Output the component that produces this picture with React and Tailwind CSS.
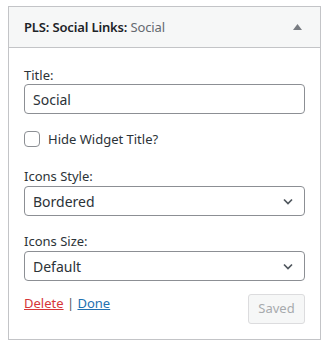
export default function App() {
  const font = { fontFamily: '"Noto Sans", "Open Sans", sans-serif' };
  return (
    <div className="w-[329px] h-[345px] bg-white pt-[6px] pl-[8px]" style={font}>
      <div className="w-[313px] h-[334px] border border-[#c3c4c7] bg-white flex flex-col">
        <div className="h-[44px] bg-[#f6f7f7] border-b border-[#c3c4c7] flex items-center justify-between pl-[15px] pr-[18px]">
          <div className="text-[13px] leading-[18px] text-[#1d2327] font-semibold tracking-[-0.15px]">
            PLS: Social Links: <span className="font-normal text-[#646970]">Social</span>
          </div>
          <svg width="9" height="6" viewBox="0 0 9 6"><polygon points="4.5,0 9,6 0,6" fill="#787c82" /></svg>
        </div>
        <div className="flex flex-col px-[15px] pt-[18px] pb-[15px] text-[#2c3338]">
          <label className="text-[13px] leading-[18px]">Title:</label>
          <div className="h-[30px] border border-[#8c8f94] rounded-[4px] flex items-center px-[8px] text-[14px] text-[#2c3338]">Social</div>
          <div className="mt-[16px] flex items-center gap-[8px]">
            <div className="w-[16px] h-[16px] border border-[#8c8f94] rounded-[4px]"></div>
            <span className="text-[13px] leading-[18px]">Hide Widget Title?</span>
          </div>
          <label className="mt-[19px] text-[13px] leading-[18px]">Icons Style:</label>
          <div className="mt-px h-[30px] border border-[#8c8f94] rounded-[4px] flex items-center justify-between pl-[8px] pr-[8px] text-[14px]">
            <span>Bordered</span>
            <svg width="16" height="16" viewBox="0 0 16 16"><path d="M4 6.5 L8 10.5 L12 6.5" stroke="#50575e" strokeWidth="1.7" fill="none" /></svg>
          </div>
          <label className="mt-[16px] text-[13px] leading-[18px]">Icons Size:</label>
          <div className="mt-px h-[30px] border border-[#8c8f94] rounded-[4px] flex items-center justify-between pl-[8px] pr-[8px] text-[14px]">
            <span>Default</span>
            <svg width="16" height="16" viewBox="0 0 16 16"><path d="M4 6.5 L8 10.5 L12 6.5" stroke="#50575e" strokeWidth="1.7" fill="none" /></svg>
          </div>
          <div className="mt-[13px] flex items-start justify-between">
            <div className="text-[13px] leading-[18px]">
              <span className="text-[#d63638] underline">Delete</span>
              <span className="text-[#50575e]"> | </span>
              <span className="text-[#2271b1] underline">Done</span>
            </div>
            <div className="w-[57px] h-[30px] border border-[#dcdcde] bg-[#f6f7f7] rounded-[3px] flex items-center justify-center text-[13px] text-[#a7aaad]">Saved</div>
          </div>
        </div>
      </div>
    </div>
  );
}
